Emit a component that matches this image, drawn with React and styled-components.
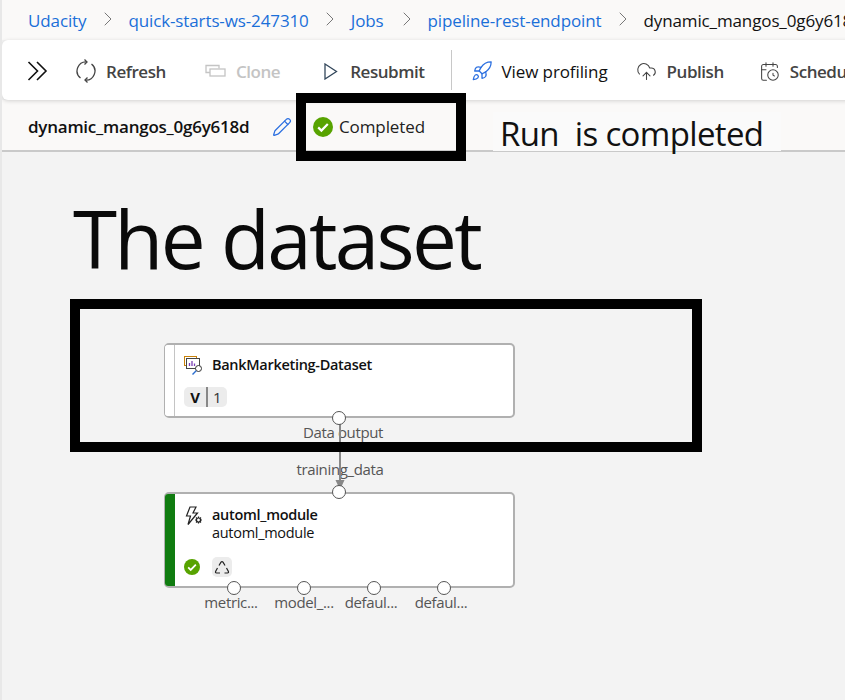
import React from "react";
import styled, { createGlobalStyle } from "styled-components";
import { ChevronRight, Rocket, CloudUpload, CalendarClock, Pencil } from "lucide-react";

const GlobalStyle = createGlobalStyle`
  html, body {
    margin: 0;
    padding: 0;
    background: #f3f3f3;
  }
  * {
    box-sizing: border-box;
  }
`;

const Page = styled.div`
  position: relative;
  width: 845px;
  height: 700px;
  overflow: hidden;
  display: flex;
  flex-direction: column;
  font-family: "Open Sans", "Noto Sans", sans-serif;
  background: #f3f3f3;
  border-left: 2px solid #e8e8e8;
`;

const Breadcrumbs = styled.nav`
  height: 40px;
  flex: none;
  display: flex;
  align-items: center;
  padding-left: 26px;
  background: #faf9f8;
  font-size: 17px;
  letter-spacing: -0.12px;
  white-space: nowrap;
`;

const Crumb = styled.span`
  color: ${(p) => (p.$current ? "#111" : "#1a6fd8")};
`;

const Sep = styled(ChevronRight)`
  color: #777;
  margin: 0 8.5px 3px ${(p) => p.$left || 9.5}px;
  flex: none;
`;

const Toolbar = styled.div`
  height: 60px;
  flex: none;
  display: flex;
  align-items: center;
  padding: 2px 0 0 25px;
  margin-right: -60px;
  background: #fff;
  border-radius: 6px 0 0 6px;
  box-shadow: 0 1px 4px rgba(0, 0, 0, 0.16);
  white-space: nowrap;
  position: relative;
  z-index: 1;
`;

const ToolButton = styled.div`
  display: flex;
  align-items: center;
  gap: ${(p) => p.$gap || 10}px;
  margin-left: ${(p) => p.$left || 0}px;
  font-size: 17px;
  font-weight: ${(p) => (p.$plain ? 400 : 600)};
  letter-spacing: ${(p) => (p.$plain ? "-0.1px" : "-0.45px")};
  color: ${(p) => (p.$disabled ? "#c4c4c4" : p.$plain ? "#111" : "#444")};
  svg {
    flex: none;
  }
`;

const Divider = styled.div`
  width: 1px;
  height: 40px;
  margin: -2px 0 0 26px;
  background: #c8c8c8;
`;

const TitleRow = styled.div`
  height: 52px;
  flex: none;
  display: flex;
  align-items: center;
  padding: 3px 0 0 26px;
  background: #faf9f8;
  border-bottom: 2px solid #c9c9c9;
`;

const RunName = styled.div`
  font-size: 17px;
  font-weight: 600;
  letter-spacing: -0.24px;
  color: #111;
  width: 244px;
`;

const Status = styled.div`
  display: flex;
  align-items: center;
  gap: 6px;
  margin-left: 21px;
  font-size: 17px;
  letter-spacing: -0.1px;
  color: #222;
`;

const Canvas = styled.div`
  position: relative;
  flex: 1;
`;

const Frame = styled.div`
  position: absolute;
  left: ${(p) => p.$x}px;
  top: ${(p) => p.$y}px;
  width: ${(p) => p.$w}px;
  height: ${(p) => p.$h}px;
  border: 10px solid #000;
  z-index: 3;
  pointer-events: none;
`;

const RunNote = styled.div`
  position: absolute;
  left: 491px;
  top: 112px;
  width: 288px;
  height: 40px;
  padding-left: 7px;
  font-size: 33px;
  line-height: 44px;
  letter-spacing: -0.65px;
  color: #111;
  background: #fafafa;
  border-bottom: 1px solid #c9c9c9;
  white-space: pre;
  z-index: 2;
`;

const Heading = styled.div`
  position: absolute;
  left: 71px;
  top: 40px;
  font-size: 80px;
  line-height: 92px;
  letter-spacing: -2.7px;
  color: #0a0a0a;
`;

const Node = styled.div`
  position: absolute;
  left: ${(p) => p.$x}px;
  top: ${(p) => p.$y}px;
  width: 351px;
  height: ${(p) => p.$h}px;
  background: #fff;
  border: 2px solid #b0b0b0;
  border-radius: 5px;
  border-left-width: 1px;
  display: flex;
`;

const Strip = styled.div`
  width: 10px;
  flex: none;
  background: ${(p) => p.$color};
  border-right: ${(p) => (p.$color === "#fff" ? "1px solid #c4c4c4" : "none")};
  border-radius: 3px 0 0 3px;
`;

const NodeBody = styled.div`
  flex: 1;
  display: flex;
  flex-direction: column;
  padding: ${(p) => p.$top || 11}px 0 0 9px;
`;

const NodeHead = styled.div`
  display: flex;
  gap: 8px;
  align-items: flex-start;
`;

const NodeTitle = styled.div`
  font-size: 14.5px;
  line-height: 18px;
  font-weight: ${(p) => (p.$light ? 400 : 600)};
  letter-spacing: -0.3px;
  color: #111;
`;

const VersionTag = styled.div`
  display: flex;
  align-items: center;
  width: 43px;
  height: 20px;
  margin-top: 11px;
  background: #ececec;
  border-radius: 5px;
  font-size: 15px;
  color: #333;
`;

const VersionKey = styled.span`
  width: 24px;
  text-align: center;
  font-weight: 700;
  color: #111;
  border-right: 2px solid #888;
  line-height: 20px;
`;

const VersionNum = styled.span`
  padding-left: 5px;
`;

const NodeFoot = styled.div`
  display: flex;
  align-items: center;
  gap: 12px;
  margin-top: 15px;
`;

const RecycleTag = styled.div`
  width: 20px;
  height: 20px;
  display: flex;
  align-items: center;
  justify-content: center;
  background: #ececec;
  border-radius: 5px;
`;

const Port = styled.div`
  position: absolute;
  left: ${(p) => p.$x}px;
  top: ${(p) => p.$y}px;
  width: 14px;
  height: 14px;
  border-radius: 50%;
  background: #fff;
  border: 1.5px solid #555;
  z-index: 2;
`;

const PortLabel = styled.div`
  position: absolute;
  left: ${(p) => p.$x}px;
  top: ${(p) => p.$y}px;
  width: ${(p) => p.$w || 70}px;
  text-align: center;
  font-size: 15px;
  line-height: 18px;
  letter-spacing: -0.35px;
  color: #555;
  white-space: nowrap;
`;

const Wire = styled.svg`
  position: absolute;
  left: 330px;
  top: 262px;
  z-index: 1;
`;

function CheckBadge({ size }) {
  return (
    <svg width={size} height={size} viewBox="0 0 20 20">
      <circle cx="10" cy="10" r="10" fill="#57a300" />
      <path d="M5.2 10.4l3.2 3.2 6.4-6.6" fill="none" stroke="#fff" strokeWidth="2.2" />
    </svg>
  );
}

function ExpandIcon() {
  return (
    <svg width="21" height="20" viewBox="0 0 21 20" fill="none" stroke="#111" strokeWidth="1.6">
      <path d="M1.5 1l9 9-9 9M10 1l9 9-9 9" />
    </svg>
  );
}

function RefreshIcon() {
  return (
    <svg width="22" height="24" viewBox="0 0 22 24" fill="none" stroke="#444" strokeWidth="1.3">
      <path d="M12 3A9 9 0 0 0 5.5 19" />
      <path d="M9.5 0.5L12 3 9.5 5.5" />
      <path d="M10 21A9 9 0 0 0 16.5 5" />
      <path d="M12.5 18.5L10 21l2.5 2.5" />
    </svg>
  );
}

function CloneIcon() {
  return (
    <svg width="21" height="14" viewBox="0 0 21 14" fill="none" stroke="#c4c4c4" strokeWidth="1.3">
      <path d="M5 8.5H1V1.5h13v3" />
      <rect x="5" y="5" width="15" height="7" />
    </svg>
  );
}

function ResubmitIcon() {
  return (
    <svg width="14" height="17" viewBox="0 0 14 17" fill="none" stroke="#33475b" strokeWidth="1.3">
      <path d="M1 1l11.5 7.5L1 16z" />
    </svg>
  );
}

function DatasetIcon() {
  return (
    <svg width="20" height="20" viewBox="0 0 20 20" fill="none">
      <rect x="0.5" y="0.5" width="12" height="9" stroke="#c8820a" />
      <rect x="2.5" y="2.5" width="13" height="10" fill="#fff" stroke="#444" />
      <path d="M5.5 10V7M8 10V5M10.5 10V7.5" stroke="#7b3fb5" strokeWidth="1.3" />
      <circle cx="14.5" cy="12.5" r="3" fill="#fff" stroke="#333" />
      <path d="M12.2 14.8L8.5 18.5" stroke="#2b6fd0" strokeWidth="1.4" />
    </svg>
  );
}

function ModuleIcon() {
  return (
    <svg width="20" height="20" viewBox="0 0 18 20" fill="none" stroke="#222" strokeWidth="1.2">
      <path d="M5 1h6L8 7h4.5L3 18.5 5.5 10H1.5z" />
      <circle cx="13.5" cy="14" r="2" />
      <path d="M13.5 10.5v1.5M13.5 16v1.5M10 14h1.5M15.5 14H17M11 11.5l1 1M15 15.5l1 1M16 11.5l-1 1M12 15.5l-1 1" />
    </svg>
  );
}

function RecycleIcon() {
  return (
    <svg width="16" height="15" viewBox="0 0 16 15" fill="none" stroke="#222" strokeWidth="1.2">
      <path d="M5 5.5L7 2.2Q8 1 9 2.2L11 5.5" />
      <path d="M12.5 8l1.8 3.2Q15 13 13.5 13H10.5" />
      <path d="M6 13H2.5Q1 13 1.7 11.2L3.5 8" />
    </svg>
  );
}

export default function App() {
  return (
    <Page>
      <GlobalStyle />
      <Breadcrumbs>
        <Crumb>Udacity</Crumb>
        <Sep size={24} strokeWidth={1} />
        <Crumb>quick-starts-ws-247310</Crumb>
        <Sep size={24} strokeWidth={1} />
        <Crumb>Jobs</Crumb>
        <Sep size={24} strokeWidth={1} $left={11.5} />
        <Crumb>pipeline-rest-endpoint</Crumb>
        <Sep size={24} strokeWidth={1} />
        <Crumb $current>dynamic_mangos_0g6y618d</Crumb>
      </Breadcrumbs>
      <Toolbar>
        <ExpandIcon />
        <ToolButton $left={27} $gap={9}>
          <RefreshIcon />
          Refresh
        </ToolButton>
        <ToolButton $left={39} $disabled>
          <CloneIcon />
          Clone
        </ToolButton>
        <ToolButton $left={44} $gap={12}>
          <ResubmitIcon />
          Resubmit
        </ToolButton>
        <Divider />
        <ToolButton $left={19} $plain $gap={9}>
          <Rocket size={22} strokeWidth={1.4} color="#2b6fe0" />
          View profiling
        </ToolButton>
        <ToolButton $left={28}>
          <CloudUpload size={21} strokeWidth={1.2} color="#444" />
          Publish
        </ToolButton>
        <ToolButton $left={35}>
          <CalendarClock size={21} strokeWidth={1.2} color="#444" />
          Schedule
        </ToolButton>
      </Toolbar>
      <TitleRow>
        <RunName>dynamic_mangos_0g6y618d</RunName>
        <Pencil size={20} strokeWidth={1.5} color="#2b6fe0" />
        <Status>
          <CheckBadge size={20} />
          Completed
        </Status>
      </TitleRow>
      <Canvas>
        <Heading>The dataset</Heading>
        <Node $x={162} $y={191} $h={75}>
          <Strip $color="#fff" />
          <NodeBody>
            <NodeHead>
              <DatasetIcon />
              <NodeTitle>BankMarketing-Dataset</NodeTitle>
            </NodeHead>
            <VersionTag>
              <VersionKey>V</VersionKey>
              <VersionNum>1</VersionNum>
            </VersionTag>
          </NodeBody>
        </Node>
        <Port $x={330} $y={259} />
        <PortLabel $x={291} $y={271} $w={100}>Data output</PortLabel>
        <Wire width="16" height="76" viewBox="0 0 16 76">
          <path d="M8 0V66" stroke="#888" strokeWidth="2" />
          <path d="M3.5 66h9L8 76z" fill="#888" />
        </Wire>
        <PortLabel $x={288} $y={308} $w={100}>training_data</PortLabel>
        <Port $x={330} $y={333} />
        <Node $x={162} $y={340} $h={96}>
          <Strip $color="#107c10" />
          <NodeBody $top={12}>
            <NodeHead>
              <ModuleIcon />
              <div>
                <NodeTitle>automl_module</NodeTitle>
                <NodeTitle $light>automl_module</NodeTitle>
              </div>
            </NodeHead>
            <NodeFoot>
              <CheckBadge size={16} />
              <RecycleTag>
                <RecycleIcon />
              </RecycleTag>
            </NodeFoot>
          </NodeBody>
        </Node>
        <Port $x={225} $y={429} />
        <Port $x={295} $y={429} />
        <Port $x={365} $y={429} />
        <Port $x={435} $y={429} />
        <PortLabel $x={194} $y={441}>metric...</PortLabel>
        <PortLabel $x={267} $y={441}>model_...</PortLabel>
        <PortLabel $x={334} $y={441}>defaul...</PortLabel>
        <PortLabel $x={404} $y={441}>defaul...</PortLabel>
        <Frame $x={68} $y={147} $w={632} $h={153} />
      </Canvas>
      <Frame $x={294} $y={93} $w={170} $h={68} />
      <RunNote>Run  is completed</RunNote>
    </Page>
  );
}
